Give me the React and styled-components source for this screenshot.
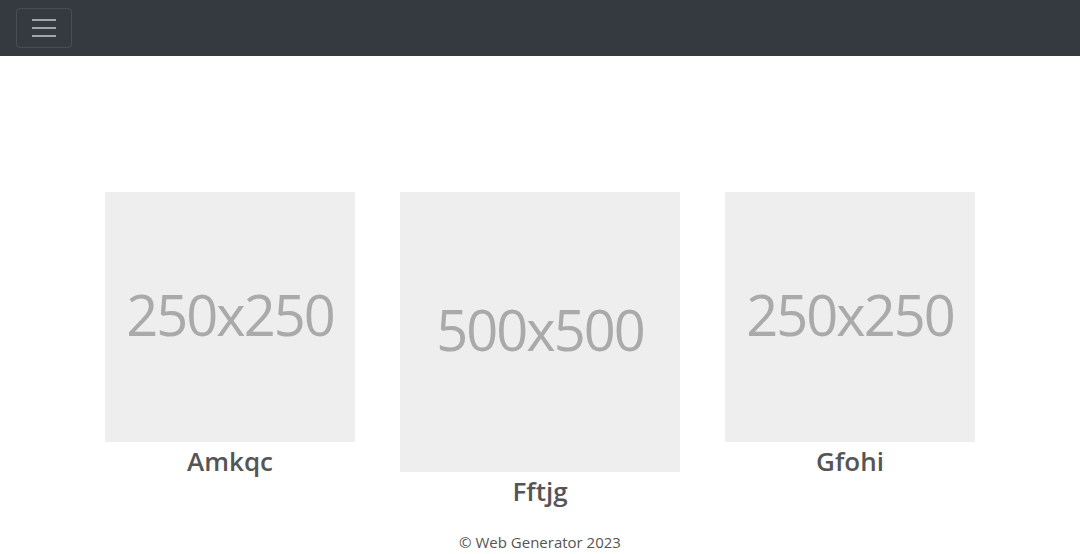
import styled, { createGlobalStyle } from "styled-components";

const GlobalStyle = createGlobalStyle`
  * {
    box-sizing: border-box;
  }

  body {
    margin: 0;
    font-family: "Open Sans", "Noto Sans", sans-serif;
    color: #555;
    background-color: #fff;
  }
`;

const Navbar = styled.nav`
  height: 56px;
  background-color: #343a40;
  display: flex;
  align-items: center;
  padding: 0 16px;
`;

const Toggler = styled.button`
  width: 56px;
  height: 40px;
  padding: 0;
  background: transparent;
  border: 1px solid rgba(255, 255, 255, 0.1);
  border-radius: 4px;
  display: flex;
  flex-direction: column;
  align-items: center;
  justify-content: center;
  gap: 6px;
  cursor: pointer;

  span {
    display: block;
    width: 24px;
    height: 2px;
    background-color: rgba(255, 255, 255, 0.55);
  }
`;

const Main = styled.main`
  padding-top: 136px;
`;

const Gallery = styled.section`
  display: flex;
  justify-content: center;
  align-items: flex-start;
  gap: 45px;
`;

const Card = styled.figure`
  margin: 0;
  width: ${(p) => p.$size}px;
  display: flex;
  flex-direction: column;
  align-items: center;
`;

const Placeholder = styled.div`
  width: ${(p) => p.$size}px;
  height: ${(p) => p.$size}px;
  background-color: #eee;
  color: #aaa;
  display: flex;
  align-items: center;
  justify-content: center;
  font-size: 56px;
  letter-spacing: -2px;
  padding-bottom: 6px;
`;

const Caption = styled.figcaption`
  font-size: 26px;
  font-weight: 600;
  line-height: 38px;
  color: #555;
`;

const Footer = styled.footer`
  margin-top: 20px;
  text-align: center;
  font-size: 15px;
  line-height: 24px;
  color: #555;
`;

const items = [
  { name: "Amkqc", size: 250, label: "250x250" },
  { name: "Fftjg", size: 280, label: "500x500" },
  { name: "Gfohi", size: 250, label: "250x250" },
];

export default function App() {
  return (
    <>
      <GlobalStyle />
      <Navbar>
        <Toggler aria-label="Toggle navigation">
          <span />
          <span />
          <span />
        </Toggler>
      </Navbar>
      <Main>
        <Gallery>
          {items.map((item) => (
            <Card key={item.name} $size={item.size}>
              <Placeholder $size={item.size}>{item.label}</Placeholder>
              <Caption>{item.name}</Caption>
            </Card>
          ))}
        </Gallery>
        <Footer>© Web Generator 2023</Footer>
      </Main>
    </>
  );
}
